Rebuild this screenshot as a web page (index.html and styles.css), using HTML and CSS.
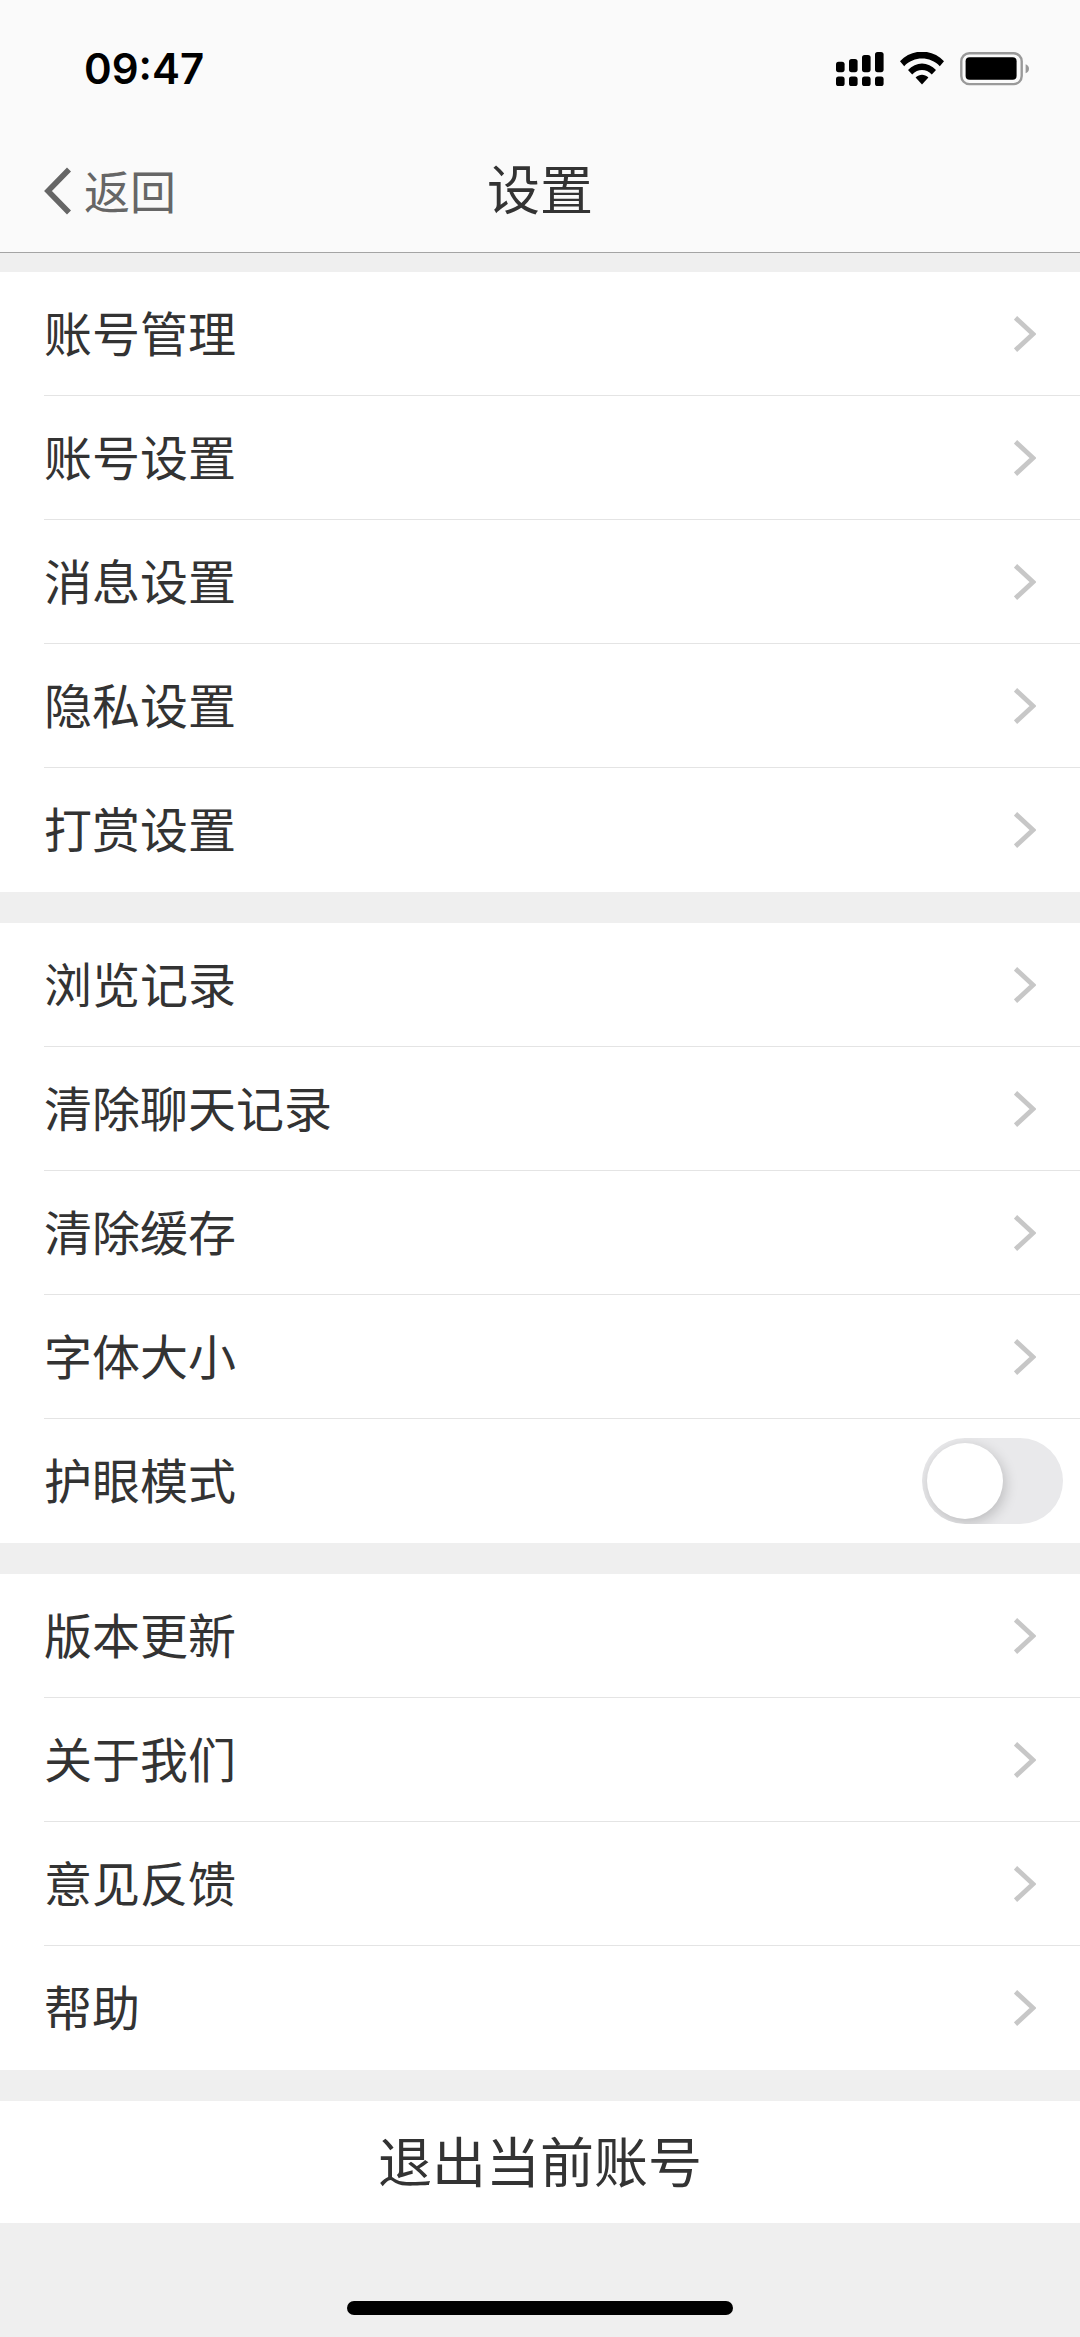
FILE: index.html
```html
<!DOCTYPE html>
<html lang="zh-CN">
<head>
<meta charset="utf-8">
<meta name="viewport" content="width=device-width, initial-scale=1">
<title>设置</title>
<link rel="stylesheet" href="styles.css">
</head>
<body>
<svg class="symbols" aria-hidden="true">
  <symbol id="chevron" viewBox="0 0 22 36"><path d="M1.5 1.8 19 18 1.5 34.2" fill="none" stroke="currentColor" stroke-width="4.8"/></symbol>
</svg>
<header class="header">
  <div class="status">
    <time class="clock">09:47</time>
    <div class="indicators">
      <svg class="signal" width="48" height="34" viewBox="0 0 48 34" aria-hidden="true">
        <rect x="0" y="9.7" width="8.6" height="10.5" rx="2.6"/>
        <rect x="13" y="7" width="8.6" height="13.2" rx="2.6"/>
        <rect x="26" y="3" width="8.6" height="17.2" rx="2.6"/>
        <rect x="39" y="0" width="8.6" height="20.2" rx="2.6"/>
        <rect x="0" y="24.6" width="8.6" height="9.4" rx="2.6"/>
        <rect x="13" y="24.6" width="8.6" height="9.4" rx="2.6"/>
        <rect x="26" y="24.6" width="8.6" height="9.4" rx="2.6"/>
        <rect x="39" y="24.6" width="8.6" height="9.4" rx="2.6"/>
      </svg>
      <svg class="wifi" width="44" height="34" viewBox="0 0 44 34" aria-hidden="true">
        <path d="M0 9.2C12-3.600 32-3.600 44 9.200L39.800 14.200C30 4 14 4 4.200 14.200Z"/>
        <path d="M8 18C16 9.200 28 9.200 36 18L31.800 22.400C26 16.600 18 16.600 12.200 22.400Z"/>
        <path d="M15.600 25.400C19.600 21.700 24.400 21.700 28.400 25.400L22 32.400Z"/>
      </svg>
      <svg class="battery" width="70" height="34" viewBox="0 0 70 34" aria-hidden="true">
        <rect x="1.300" y="1.300" width="60.400" height="30.800" rx="8" fill="none" stroke="#999" stroke-width="2.400"/>
        <rect x="5.600" y="5.200" width="51" height="22.600" rx="4"/>
        <path d="M65.600 12.200Q69 13.500 69 16.700T65.600 21.200Z" fill="#999"/>
      </svg>
    </div>
  </div>
  <nav class="nav">
    <button class="back" type="button">
      <svg width="28" height="48" viewBox="0 0 28 48" aria-hidden="true"><path d="M25 2.500 4 24 25 45.500" fill="none" stroke="currentColor" stroke-width="5.600"/></svg>
      <span class="label">返回</span>
    </button>
    <h1 class="title label">设置</h1>
  </nav>
</header>
<main class="groups">
  <ul class="group">
    <li><a class="row" href="#"><span class="label">账号管理</span><svg class="chevron"><use href="#chevron"/></svg></a></li>
    <li><a class="row" href="#"><span class="label">账号设置</span><svg class="chevron"><use href="#chevron"/></svg></a></li>
    <li><a class="row" href="#"><span class="label">消息设置</span><svg class="chevron"><use href="#chevron"/></svg></a></li>
    <li><a class="row" href="#"><span class="label">隐私设置</span><svg class="chevron"><use href="#chevron"/></svg></a></li>
    <li><a class="row" href="#"><span class="label">打赏设置</span><svg class="chevron"><use href="#chevron"/></svg></a></li>
  </ul>
  <ul class="group">
    <li><a class="row" href="#"><span class="label">浏览记录</span><svg class="chevron"><use href="#chevron"/></svg></a></li>
    <li><a class="row" href="#"><span class="label">清除聊天记录</span><svg class="chevron"><use href="#chevron"/></svg></a></li>
    <li><a class="row" href="#"><span class="label">清除缓存</span><svg class="chevron"><use href="#chevron"/></svg></a></li>
    <li><a class="row" href="#"><span class="label">字体大小</span><svg class="chevron"><use href="#chevron"/></svg></a></li>
    <li class="row row-switch"><label class="label" for="eye-care">护眼模式</label><input class="switch" id="eye-care" type="checkbox" role="switch"></li>
  </ul>
  <ul class="group">
    <li><a class="row" href="#"><span class="label">版本更新</span><svg class="chevron"><use href="#chevron"/></svg></a></li>
    <li><a class="row" href="#"><span class="label">关于我们</span><svg class="chevron"><use href="#chevron"/></svg></a></li>
    <li><a class="row" href="#"><span class="label">意见反馈</span><svg class="chevron"><use href="#chevron"/></svg></a></li>
    <li><a class="row" href="#"><span class="label">帮助</span><svg class="chevron"><use href="#chevron"/></svg></a></li>
  </ul>
  <button class="logout label" type="button">退出当前账号</button>
</main>
<div class="home-indicator"></div>
</body>
</html>
```
FILE: styles.css
```css
* {
  box-sizing: border-box;
}

body {
  display: flex;
  flex-direction: column;
  min-height: 100vh;
  margin: 0;
  background: #efefef;
  color: #333;
  font-family: "Noto Sans CJK SC", sans-serif;
  font-size: 48px;
}

button {
  margin: 0;
  padding: 0;
  border: 0;
  background: none;
  color: inherit;
  font: inherit;
}

svg {
  flex: none;
}

.symbols {
  display: block;
  width: 0;
  height: 0;
}

/* The CJK face sits low in its line box; this centres the glyphs. */
.label {
  padding-bottom: 5px;
}

.header {
  background: #fafafa;
  border-bottom: 1px solid #a4a4a4;
}

.status {
  display: flex;
  align-items: center;
  justify-content: space-between;
  height: 126px;
  padding: 12px 50px 0 84px;
}

.clock {
  color: #000;
  font: 600 42px/48px Inter, sans-serif;
}

.indicators {
  display: flex;
  gap: 16px;
}

.nav {
  display: grid;
  grid-template-columns: 1fr auto 1fr;
  align-items: center;
  height: 126px;
  padding: 0 44px;
}

.back {
  display: flex;
  align-items: center;
  justify-self: start;
  gap: 12px;
  padding-top: 4px;
  color: #666;
  font-size: 46px;
  line-height: 60px;
}

.title {
  margin: 0;
  font-size: 53px;
  font-weight: 400;
  line-height: 72px;
}

.groups {
  display: flex;
  flex-direction: column;
  gap: 31px;
  padding-top: 19px;
}

.group {
  margin: 0;
  padding: 0 0 0 44px;
  background: #fff;
  list-style: none;
}

.row {
  display: flex;
  align-items: center;
  justify-content: space-between;
  height: 124px;
  padding-right: 44px;
  border-bottom: 1px solid #e4e4e4;
  color: inherit;
  line-height: 72px;
  text-decoration: none;
}

.row-switch,
li:last-child .row {
  border-bottom-color: transparent;
}

.row-switch {
  padding-right: 17px;
}

.chevron {
  width: 22px;
  height: 36px;
  color: #c7c7c7;
}

.switch {
  flex: none;
  appearance: none;
  width: 141px;
  height: 86px;
  margin: 0;
  padding: 5px;
  overflow: hidden;
  border-radius: 43px;
  background: #e9e9eb;
}

.switch::before {
  content: "";
  display: block;
  width: 76px;
  height: 76px;
  border-radius: 50%;
  background: #fff;
  box-shadow: 2px 4px 14px rgba(0, 0, 0, 0.2);
}

.switch:checked {
  background: #34c759;
}

.switch:checked::before {
  margin-left: auto;
}

.logout {
  height: 122px;
  background: #fff;
  font-size: 54px;
  line-height: 72px;
}

.home-indicator {
  width: 386px;
  height: 14px;
  margin: auto auto 22px;
  border-radius: 7px;
  background: #000;
}
```
